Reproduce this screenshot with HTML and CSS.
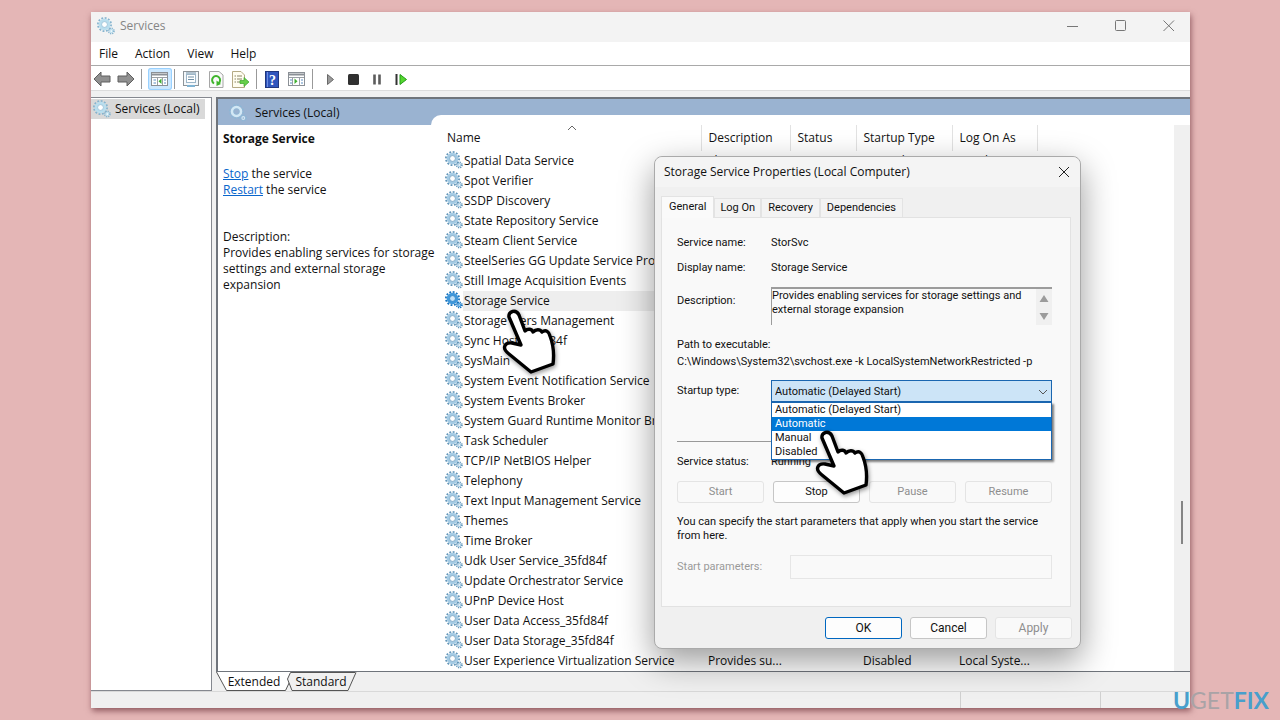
FILE: index.html
```html
<!DOCTYPE html>
<html lang="en">
<head>
<meta charset="utf-8">
<title>Services</title>
<link rel="stylesheet" href="styles.css">
</head>
<body>
<svg class="defs" aria-hidden="true">
  <symbol id="gear" viewBox="0 0 18 18">
    <circle cx="7.5" cy="7.5" r="6.6" fill="none" stroke="var(--tooth)" stroke-width="1.8" stroke-dasharray="1.9 1.556"/>
    <circle cx="7.5" cy="7.5" r="4.4" fill="var(--hub)" stroke="var(--ring)" stroke-width="2.8"/>
    <circle cx="7.5" cy="7.5" r="2.9" fill="none" stroke="var(--tooth)" stroke-width=".7"/>
    <circle cx="14.3" cy="14" r="2.6" fill="none" stroke="var(--tooth)" stroke-width="1.8" stroke-dasharray="1.2 .842"/>
    <circle cx="14.3" cy="14" r="1.4" fill="var(--hub)" stroke="var(--ring)" stroke-width="1.1"/>
  </symbol>
  <symbol id="hand" viewBox="0 0 54 66">
    <path d="M7 8C6 2 14 0 17 6L23 22C26 19 30 20 31 23C34 20 38 20 40 23C44 20 47 23 48 27Q53 40 51 55L29 63L7 45C-1 39 3 33 10 34L19 36L16 29Z" fill="#fff" stroke="#000" stroke-width="3.4" stroke-linejoin="round"/>
  </symbol>
</svg>

<main class="window">
  <header class="titlebar">
    <svg class="gear pale"><use href="#gear"/></svg>
    <h1>Services</h1>
    <div class="caption">
      <button aria-label="Minimize"><svg width="12" height="12"><path d="M0 6.500H11"/></svg></button>
      <button aria-label="Maximize"><svg width="12" height="12"><rect x=".5" y=".5" width="10" height="10" rx="1"/></svg></button>
      <button aria-label="Close"><svg width="12" height="12"><path d="M.5.5L11 11M11 .5L.5 11"/></svg></button>
    </div>
  </header>
  <nav class="menubar">
    <button>File</button><button>Action</button><button>View</button><button>Help</button>
  </nav>
  <div class="toolbar">
    <button aria-label="Back"><svg width="18" height="16"><path d="M1 8L8 1V5H17V11H8V15Z" fill="#909090" stroke="#5e5e5e"/></svg></button>
    <button class="fwd" aria-label="Forward"><svg width="18" height="16"><path d="M17 8L10 1V5H1V11H10V15Z" fill="#909090" stroke="#5e5e5e"/></svg></button>
    <i></i>
    <button class="on" aria-label="Show console tree"><svg width="18" height="16"><rect x=".5" y="1.500" width="16" height="13" fill="#fff" stroke="#8b9096"/><path d="M1 3.500H16" stroke="#8b9096" stroke-width="2"/><path d="M1 6.500H16M6.500 6V14M11.500 6V14" stroke="#9aa0a6"/><path d="M2.500 9H5M2.500 12H5M13 9H15M13 12H15" stroke="#5b8fc4"/><path d="M10.500 7.500V13L7.500 10.200Z" fill="#3cae2e"/></svg></button>
    <i></i>
    <button class="b-prop" aria-label="Properties"><svg width="16" height="16"><rect x=".5" y=".5" width="15" height="14" fill="#f4f8fb" stroke="#8d9499"/><rect x="3.500" y="3.500" width="9" height="8" fill="#fff" stroke="#9db6c8"/><path d="M5 6H11M5 8.500H11M3 2H13" stroke="#6f8fa6"/><path d="M4 15H12" stroke="#80b4d4" stroke-width="2"/></svg></button>
    <button class="b-ref" aria-label="Refresh"><svg width="15" height="17"><path d="M.5.500H10L14 4V16.500H.5Z" fill="#fafafa" stroke="#a6a6a6"/><path d="M5 12.500A4 4 0 1 1 9.500 12.300" fill="none" stroke="#3fb52c" stroke-width="2"/><path d="M7.500 9.500L12 13L7.500 15Z" fill="#3fb52c"/></svg></button>
    <button class="b-exp" aria-label="Export list"><svg width="18" height="17"><path d="M.5.500H9L12.500 4V16.500H.5Z" fill="#fffdf0" stroke="#b5aa85"/><path d="M2.500 5H4M2.500 8H4M2.500 11H4M5 5H10M5 8H10M5 11H9" stroke="#8a8566"/><path d="M8 9.500H12V6.500L17 11L12 15.500V12.500H8Z" fill="#66cf4a" stroke="#3ba32a" stroke-width=".7"/></svg></button>
    <i class="b-sep"></i>
    <button class="b-help" aria-label="Help"><svg width="14" height="17"><rect x=".5" y=".5" width="13" height="16" fill="#2f55bd" stroke="#20377e"/><path d="M2.500 1V16" stroke="#6f8ee0"/><text x="4" y="14" class="q">?</text></svg></button>
    <button class="b-act" aria-label="Show action pane"><svg width="18" height="16"><rect x=".5" y="1.500" width="16" height="13" fill="#fff" stroke="#8b9096"/><path d="M1 3.500H16" stroke="#8b9096" stroke-width="2"/><path d="M1 6.500H16M4.500 6V14M11.500 6V14" stroke="#9aa0a6"/><path d="M2 9H4M2 12H4M13 9H15M13 12H15" stroke="#5b8fc4"/><path d="M6.500 7.500V13L9.500 10.200Z" fill="#3cae2e"/></svg></button>
    <i></i>
    <button class="b-play" aria-label="Start service"><svg width="9" height="13"><path d="M1.500 1.500V11.500L7.500 6.500Z" fill="#9a9a9a" stroke="#696969"/></svg></button>
    <button class="b-stop" aria-label="Stop service"><svg width="11" height="11"><rect width="11" height="11" rx="1.500" fill="#303030"/></svg></button>
    <button class="b-stop" aria-label="Pause service"><svg width="10" height="11"><path d="M2.500 .5V10.500M7.500 .5V10.500" stroke="#5c5c5c" stroke-width="2.600"/></svg></button>
    <button class="b-stop" aria-label="Restart service"><svg width="13" height="13"><path d="M1.500 1V12" stroke="#333" stroke-width="2"/><path d="M5 1.500V11.500L11.500 6.500Z" fill="#55d62f" stroke="#239c18"/></svg></button>
  </div>

  <div class="content">
    <aside class="tree">
      <div class="node"><svg class="gear pale"><use href="#gear"/></svg><span>Services (Local)</span></div>
    </aside>
    <section class="right">
      <div class="pane">
        <div class="blue"><svg class="gear light"><use href="#gear"/></svg><span>Services (Local)</span></div>
        <div class="split">
          <div class="info">
            <h2>Storage Service</h2>
            <p><a href="#stop">Stop</a> the service<br><a href="#restart">Restart</a> the service</p>
            <p class="desc">Description:<br>Provides enabling services for storage<br>settings and external storage<br>expansion</p>
          </div>
          <div class="list">
            <table>
              <colgroup><col class="c1"><col class="c2"><col class="c3"><col class="c4"><col class="c5"></colgroup>
              <thead><tr><th>Name<svg class="sort" width="10" height="6"><path d="M1 5L5 1L9 5"/></svg></th><th>Description</th><th>Status</th><th>Startup Type</th><th>Log On As</th></tr></thead>
              <tbody>
                <tr><td><svg class="gear"><use href="#gear"/></svg>Spatial Data Service</td><td>This servic...</td><td></td><td>Manual</td><td>Local Syste...</td></tr>
                <tr><td><svg class="gear"><use href="#gear"/></svg>Spot Verifier</td><td></td><td></td><td></td><td></td></tr>
                <tr><td><svg class="gear"><use href="#gear"/></svg>SSDP Discovery</td><td></td><td></td><td></td><td></td></tr>
                <tr><td><svg class="gear"><use href="#gear"/></svg>State Repository Service</td><td></td><td></td><td></td><td></td></tr>
                <tr><td><svg class="gear"><use href="#gear"/></svg>Steam Client Service</td><td></td><td></td><td></td><td></td></tr>
                <tr><td><svg class="gear"><use href="#gear"/></svg>SteelSeries GG Update Service Proxy</td><td></td><td></td><td></td><td></td></tr>
                <tr><td><svg class="gear"><use href="#gear"/></svg>Still Image Acquisition Events</td><td></td><td></td><td></td><td></td></tr>
                <tr class="sel"><td><svg class="gear"><use href="#gear"/></svg>Storage Service</td><td></td><td></td><td></td><td></td></tr>
                <tr><td><svg class="gear"><use href="#gear"/></svg>Storage Tiers Management</td><td></td><td></td><td></td><td></td></tr>
                <tr><td><svg class="gear"><use href="#gear"/></svg>Sync Host_35fd84f</td><td></td><td></td><td></td><td></td></tr>
                <tr><td><svg class="gear"><use href="#gear"/></svg>SysMain</td><td></td><td></td><td></td><td></td></tr>
                <tr><td><svg class="gear"><use href="#gear"/></svg>System Event Notification Service</td><td></td><td></td><td></td><td></td></tr>
                <tr><td><svg class="gear"><use href="#gear"/></svg>System Events Broker</td><td></td><td></td><td></td><td></td></tr>
                <tr><td><svg class="gear"><use href="#gear"/></svg>System Guard Runtime Monitor Broker</td><td></td><td></td><td></td><td></td></tr>
                <tr><td><svg class="gear"><use href="#gear"/></svg>Task Scheduler</td><td></td><td></td><td></td><td></td></tr>
                <tr><td><svg class="gear"><use href="#gear"/></svg>TCP/IP NetBIOS Helper</td><td></td><td></td><td></td><td></td></tr>
                <tr><td><svg class="gear"><use href="#gear"/></svg>Telephony</td><td></td><td></td><td></td><td></td></tr>
                <tr><td><svg class="gear"><use href="#gear"/></svg>Text Input Management Service</td><td></td><td></td><td></td><td></td></tr>
                <tr><td><svg class="gear"><use href="#gear"/></svg>Themes</td><td></td><td></td><td></td><td></td></tr>
                <tr><td><svg class="gear"><use href="#gear"/></svg>Time Broker</td><td></td><td></td><td></td><td></td></tr>
                <tr><td><svg class="gear"><use href="#gear"/></svg>Udk User Service_35fd84f</td><td></td><td></td><td></td><td></td></tr>
                <tr><td><svg class="gear"><use href="#gear"/></svg>Update Orchestrator Service</td><td></td><td></td><td></td><td></td></tr>
                <tr><td><svg class="gear"><use href="#gear"/></svg>UPnP Device Host</td><td></td><td></td><td></td><td></td></tr>
                <tr><td><svg class="gear"><use href="#gear"/></svg>User Data Access_35fd84f</td><td></td><td></td><td></td><td></td></tr>
                <tr><td><svg class="gear"><use href="#gear"/></svg>User Data Storage_35fd84f</td><td></td><td></td><td></td><td></td></tr>
                <tr><td><svg class="gear"><use href="#gear"/></svg>User Experience Virtualization Service</td><td>Provides su...</td><td></td><td>Disabled</td><td>Local Syste...</td></tr>
              </tbody>
            </table>
            <div class="scroll"><div class="thumb"></div></div>
          </div>
        </div>
      </div>
      <div class="tabs">
        <button><svg width="76" height="20"><path d="M.5 0L10.500 18.500H69.500L75 7V0Z" fill="#fff"/><path d="M.5 0L10.500 18.500H69.500L75 7" fill="none" stroke="#555"/></svg><span>Extended</span></button>
        <button class="std"><svg width="70" height="20"><path d="M68.500 .5H3.500L.5 7L5 18.500H61L69 .5" fill="#f0f0f0" stroke="#555"/></svg><span>Standard</span></button>
      </div>
    </section>
  </div>
  <footer class="status"><span></span><span></span><span></span></footer>
</main>

<section class="dialog" role="dialog" aria-labelledby="dlg-title">
  <header><h2 id="dlg-title">Storage Service Properties (Local Computer)</h2>
    <button aria-label="Close dialog"><svg width="12" height="12"><path d="M1 1L11 11M11 1L1 11"/></svg></button></header>
  <div class="dtabs" role="tablist">
    <button role="tab" aria-selected="true">General</button><button role="tab">Log On</button><button role="tab">Recovery</button><button role="tab">Dependencies</button>
  </div>
  <form class="sheet">
    <div class="row"><span>Service name:</span><span>StorSvc</span></div>
    <div class="row"><span>Display name:</span><span>Storage Service</span></div>
    <div class="row top"><label for="desc">Description:</label>
      <div class="area"><textarea id="desc" readonly>Provides enabling services for storage settings and external storage expansion</textarea>
        <svg width="16" height="36"><rect width="16" height="36" fill="#f0f0f0"/><path d="M3.500 13L8 6L12.500 13ZM3.500 24L8 31L12.500 24Z" fill="#9b9b9b"/></svg></div></div>
    <p class="path">Path to executable:<br>C:\Windows\System32\svchost.exe -k LocalSystemNetworkRestricted -p</p>
    <div class="row combo"><label for="type">Startup type:</label>
      <div class="field"><select id="type"><option>Automatic (Delayed Start)</option></select>
        <svg class="chev" width="10" height="6"><path d="M1 1L5 5L9 1"/></svg>
        <ul role="listbox"><li role="option">Automatic (Delayed Start)</li><li role="option" aria-selected="true">Automatic</li><li role="option">Manual</li><li role="option">Disabled</li></ul></div></div>
    <hr>
    <div class="row state"><span>Service status:</span><span>Running</span></div>
    <div class="actions"><button type="button" disabled>Start</button><button type="button">Stop</button><button type="button" disabled>Pause</button><button type="button" disabled>Resume</button></div>
    <p class="hint">You can specify the start parameters that apply when you start the service from here.</p>
    <div class="params"><label for="par">Start parameters:</label><input id="par" type="text" disabled></div>
  </form>
  <footer><button class="ok">OK</button><button>Cancel</button><button disabled>Apply</button></footer>
</section>

<svg class="hand h1"><use href="#hand"/></svg>
<svg class="hand h2"><use href="#hand"/></svg>
<div class="logo"><b>U</b>GET<b>FIX</b></div>
</body>
</html>
```
FILE: styles.css
```css
* { box-sizing: border-box; }
body {
  margin: 0;
  min-height: 100vh;
  padding: 12px 90px 12px 91px;
  display: flex;
  position: relative;
  overflow: hidden;
  background: #e4b6b6;
  color: #111;
  font: 12px/16px "Open Sans", "Noto Sans", sans-serif;
}
h1, h2, p, ul { margin: 0; padding: 0; font-size: inherit; font-weight: 400; }
button { margin: 0; padding: 0; border: 0; background: none; color: inherit; font: inherit; }
svg { display: block; flex: none; }
.defs { position: absolute; width: 0; height: 0; }
.gear { width: 18px; height: 18px; --tooth: #6597b9; --ring: #a5cbe4; --hub: #fff; }
.gear.pale { --tooth: #86b4cf; --ring: #b9deee; }
.gear.light { --tooth: #8db7d6; --ring: #d2e8f5; --hub: #9ab3d1; }

.window {
  flex: 1;
  display: flex;
  flex-direction: column;
  background: #f0f0f0;
  box-shadow: 1px 3px 6px rgba(90, 30, 40, .6);
}
.titlebar { display: flex; align-items: center; gap: 5px; height: 30px; padding: 0 15px 2px 6px; background: #f3f3f3; color: #858585; }
.caption { display: flex; gap: 36px; margin-left: auto; }
.caption svg { fill: none; stroke: #777; }
.menubar { display: flex; gap: 17px; height: 24px; padding: 0 8px; background: #fff; border-bottom: 1px solid #a9a9a9; }
.toolbar { display: flex; align-items: center; height: 25px; padding: 2px 0 0 2px; background: #fff; border-bottom: 1px solid #dcdcdc; }
.toolbar i { width: 1px; height: 20px; margin: 0 6px; background: #999; }
.toolbar .fwd { margin-left: 6px; }
.toolbar .on { margin: 0 -4px 0 0; padding: 3px; height: 22px; border-radius: 3px; background: #cce8ff; box-shadow: inset 0 0 0 1px #99d1ff; }
.toolbar .b-prop { margin-left: 2px; }
.toolbar .b-ref { margin-left: 10px; }
.toolbar .b-exp { margin-left: 8px; }
.toolbar .b-help { margin-left: 2px; }
.toolbar .b-act { margin-left: 9px; }
.toolbar .b-play { margin-left: 7px; }
.toolbar .b-stop { margin-left: 13px; }
.q { font: 700 14px "Liberation Serif", serif; fill: #fff; }

.content { flex: 1; display: flex; gap: 4px; padding-top: 6px; }
.tree { width: 121px; background: #fff; border: solid #85888f; border-width: 1px 1px 1px 0; }
.node { display: flex; align-items: center; gap: 4px; width: 114px; height: 20px; margin-top: 1px; padding-left: 2px; background: #d9d9d9; white-space: nowrap; }
.right { flex: 1; min-width: 0; display: flex; flex-direction: column; }
.pane { flex: 1; display: flex; flex-direction: column; background: #fff; border: solid #6f747b; border-width: 2px 0 1px 2px; }
.blue { display: flex; align-items: center; gap: 8px; height: 26px; padding: 2px 0 0 11px; background: #9ab3d1; }
.split { flex: 1; display: flex; }
.info { width: 213px; padding: 6px 0 0 5px; white-space: nowrap; position: relative; z-index: 1; }
.info h2 { font-weight: 700; }
.info p { margin-top: 19px; }
.info .desc { margin-top: 31px; }
a { color: #0a66cc; }
.list { flex: 1; display: flex; margin-top: -10px; padding-top: 10px; background: #fff; border-top-left-radius: 10px; position: relative; }
table { table-layout: fixed; width: 606px; border-collapse: collapse; }
.c1 { width: 270px; }
.c2 { width: 89px; }
.c3 { width: 66px; }
.c4 { width: 96px; }
.c5 { width: 85px; }
th { height: 26px; padding: 0 0 0 7px; font-weight: 400; text-align: left; border-right: 1px solid #e2e2e2; position: relative; white-space: nowrap; }
th:first-child { padding-left: 16px; }
.sort { position: absolute; left: 136px; top: 0; fill: none; stroke: #666; }
td { height: 20px; padding: 0 0 0 7px; white-space: nowrap; overflow: hidden; }
td:first-child { padding-left: 33px; position: relative; }
td .gear { position: absolute; left: 14px; top: 0; }
.sel { background: linear-gradient(to right, #fff 32px, #eee 32px); }
.sel .gear { --tooth: #1672bd; --ring: #3f97da; --hub: #bfe0f7; }
.scroll { width: 16px; margin-left: auto; background: #f0f0f0; display: flex; justify-content: center; align-items: flex-end; padding-bottom: 127px; }
.thumb { width: 2px; height: 43px; background: #858585; }
.tabs { display: flex; height: 19px; }
.tabs button { position: relative; width: 74px; padding: 1px 0 0 2px; }
.tabs .std { width: 68px; margin-left: -3px; padding-left: 0; }
.tabs svg { position: absolute; left: 0; top: 0; }
.tabs span { position: relative; }
.status { display: grid; grid-template-columns: 1fr 140px 89px; height: 17px; border-top: 1px solid #d9d9d9; }
.status span { border-right: 1px solid #d0d0d0; }
.status span:last-child { border-right: 0; }

.dialog {
  position: absolute;
  left: 654px;
  top: 156px;
  width: 427px;
  padding: 0 9px 9px 6px;
  background: #f0f0f0;
  border: 1px solid #aaa;
  border-radius: 8px;
  box-shadow: 0 12px 34px rgba(0, 0, 0, .4);
  font: 11px/14px Roboto, "Liberation Sans", sans-serif;
}
.dialog header { display: flex; justify-content: space-between; align-items: center; height: 30px; margin: 0 -9px 0 -6px; padding: 0 10px 0 9px; background: #f4f4f4; border-radius: 8px 8px 0 0; font: 12px/16px "Open Sans", "Noto Sans", sans-serif; }
.dialog header svg { fill: none; stroke: #222; }
.dtabs { display: flex; align-items: flex-end; height: 30px; }
.dtabs button { height: 19px; padding: 0 5px; background: #f3f3f3; border: 1px solid #e3e3e3; border-bottom: 0; }
.dtabs button + button + button { padding: 0 6px; }
.dtabs [aria-selected] { height: 22px; padding: 0 7px 2px; background: #fafafa; margin-bottom: -1px; position: relative; z-index: 1; }
.sheet { padding: 12px 18px 27px 15px; background: #f9f9f9; border: 1px solid #e2e2e2; }
.row { display: flex; height: 25px; align-items: center; }
.row > :first-child { width: 94px; flex: none; }
.top { height: 38px; margin-top: 7px; align-items: flex-start; }
.top label { line-height: 28px; }
.area { flex: 1; display: flex; justify-content: space-between; height: 38px; border: solid #9c9c9c; border-width: 2px 0 0 1px; }
textarea { width: 262px; height: 36px; padding: 0; border: 0; resize: none; overflow: hidden; background: none; font: inherit; color: inherit; outline: 0; }
.path { margin-top: 11px; line-height: 17px; white-space: nowrap; }
.combo { height: 22px; margin-top: 10px; }
.field { flex: 1; position: relative; }
select { display: block; width: 100%; height: 22px; padding: 1px 3px 0; appearance: none; border: 1px solid #1a66b0; border-radius: 0; background: #cce4f7; color: inherit; font: inherit; }
.chev { position: absolute; right: 4px; top: 9px; fill: none; stroke: #555; }
ul { position: absolute; left: 0; right: 0; top: 22px; list-style: none; background: #fff; border: 1px solid #1a66b0; box-shadow: 2px 2px 2px rgba(0, 0, 0, .5); z-index: 1; }
li { height: 14px; padding-left: 3px; line-height: 14px; }
li[aria-selected] { background: #0078d7; color: #fff; }
hr { height: 1px; margin: 39px 0 0; border: 0; background: #999; }
.state { height: 20px; margin-top: 10px; }
.actions { display: grid; grid-template-columns: repeat(4, 1fr); gap: 9px; margin-top: 9px; }
.actions button, .dialog > footer button { height: 22px; background: #fdfdfd; border: 1px solid #c6c6c6; border-radius: 3px; }
.dialog button:disabled { color: #8e8e8e; border-color: #e4e4e4; background: #f9f9f9; }
.hint { margin-top: 12px; }
.params { display: flex; align-items: center; justify-content: space-between; margin-top: 12px; color: #999; }
input { width: 262px; height: 24px; border: 1px solid #e6e6e6; background: #f9f9f9; }
.dialog > footer { display: flex; justify-content: flex-end; gap: 8px; margin: 10px -1px 0 0; }
.dialog > footer button { width: 77px; font-size: 12px; }
.dialog > footer .ok { border: 1px solid #0067c0; }

.hand { position: absolute; z-index: 2; width: 54px; height: 66px; filter: drop-shadow(1px 2px 2px rgba(0, 0, 0, .4)); }
.h1 { left: 502px; top: 309px; }
.h2 { left: 815px; top: 430px; }
.logo { position: absolute; right: 11px; bottom: 8px; color: #a9a3a6; font: 23px/24px Lato, sans-serif; }
.logo b { color: #489fcc; }
```
